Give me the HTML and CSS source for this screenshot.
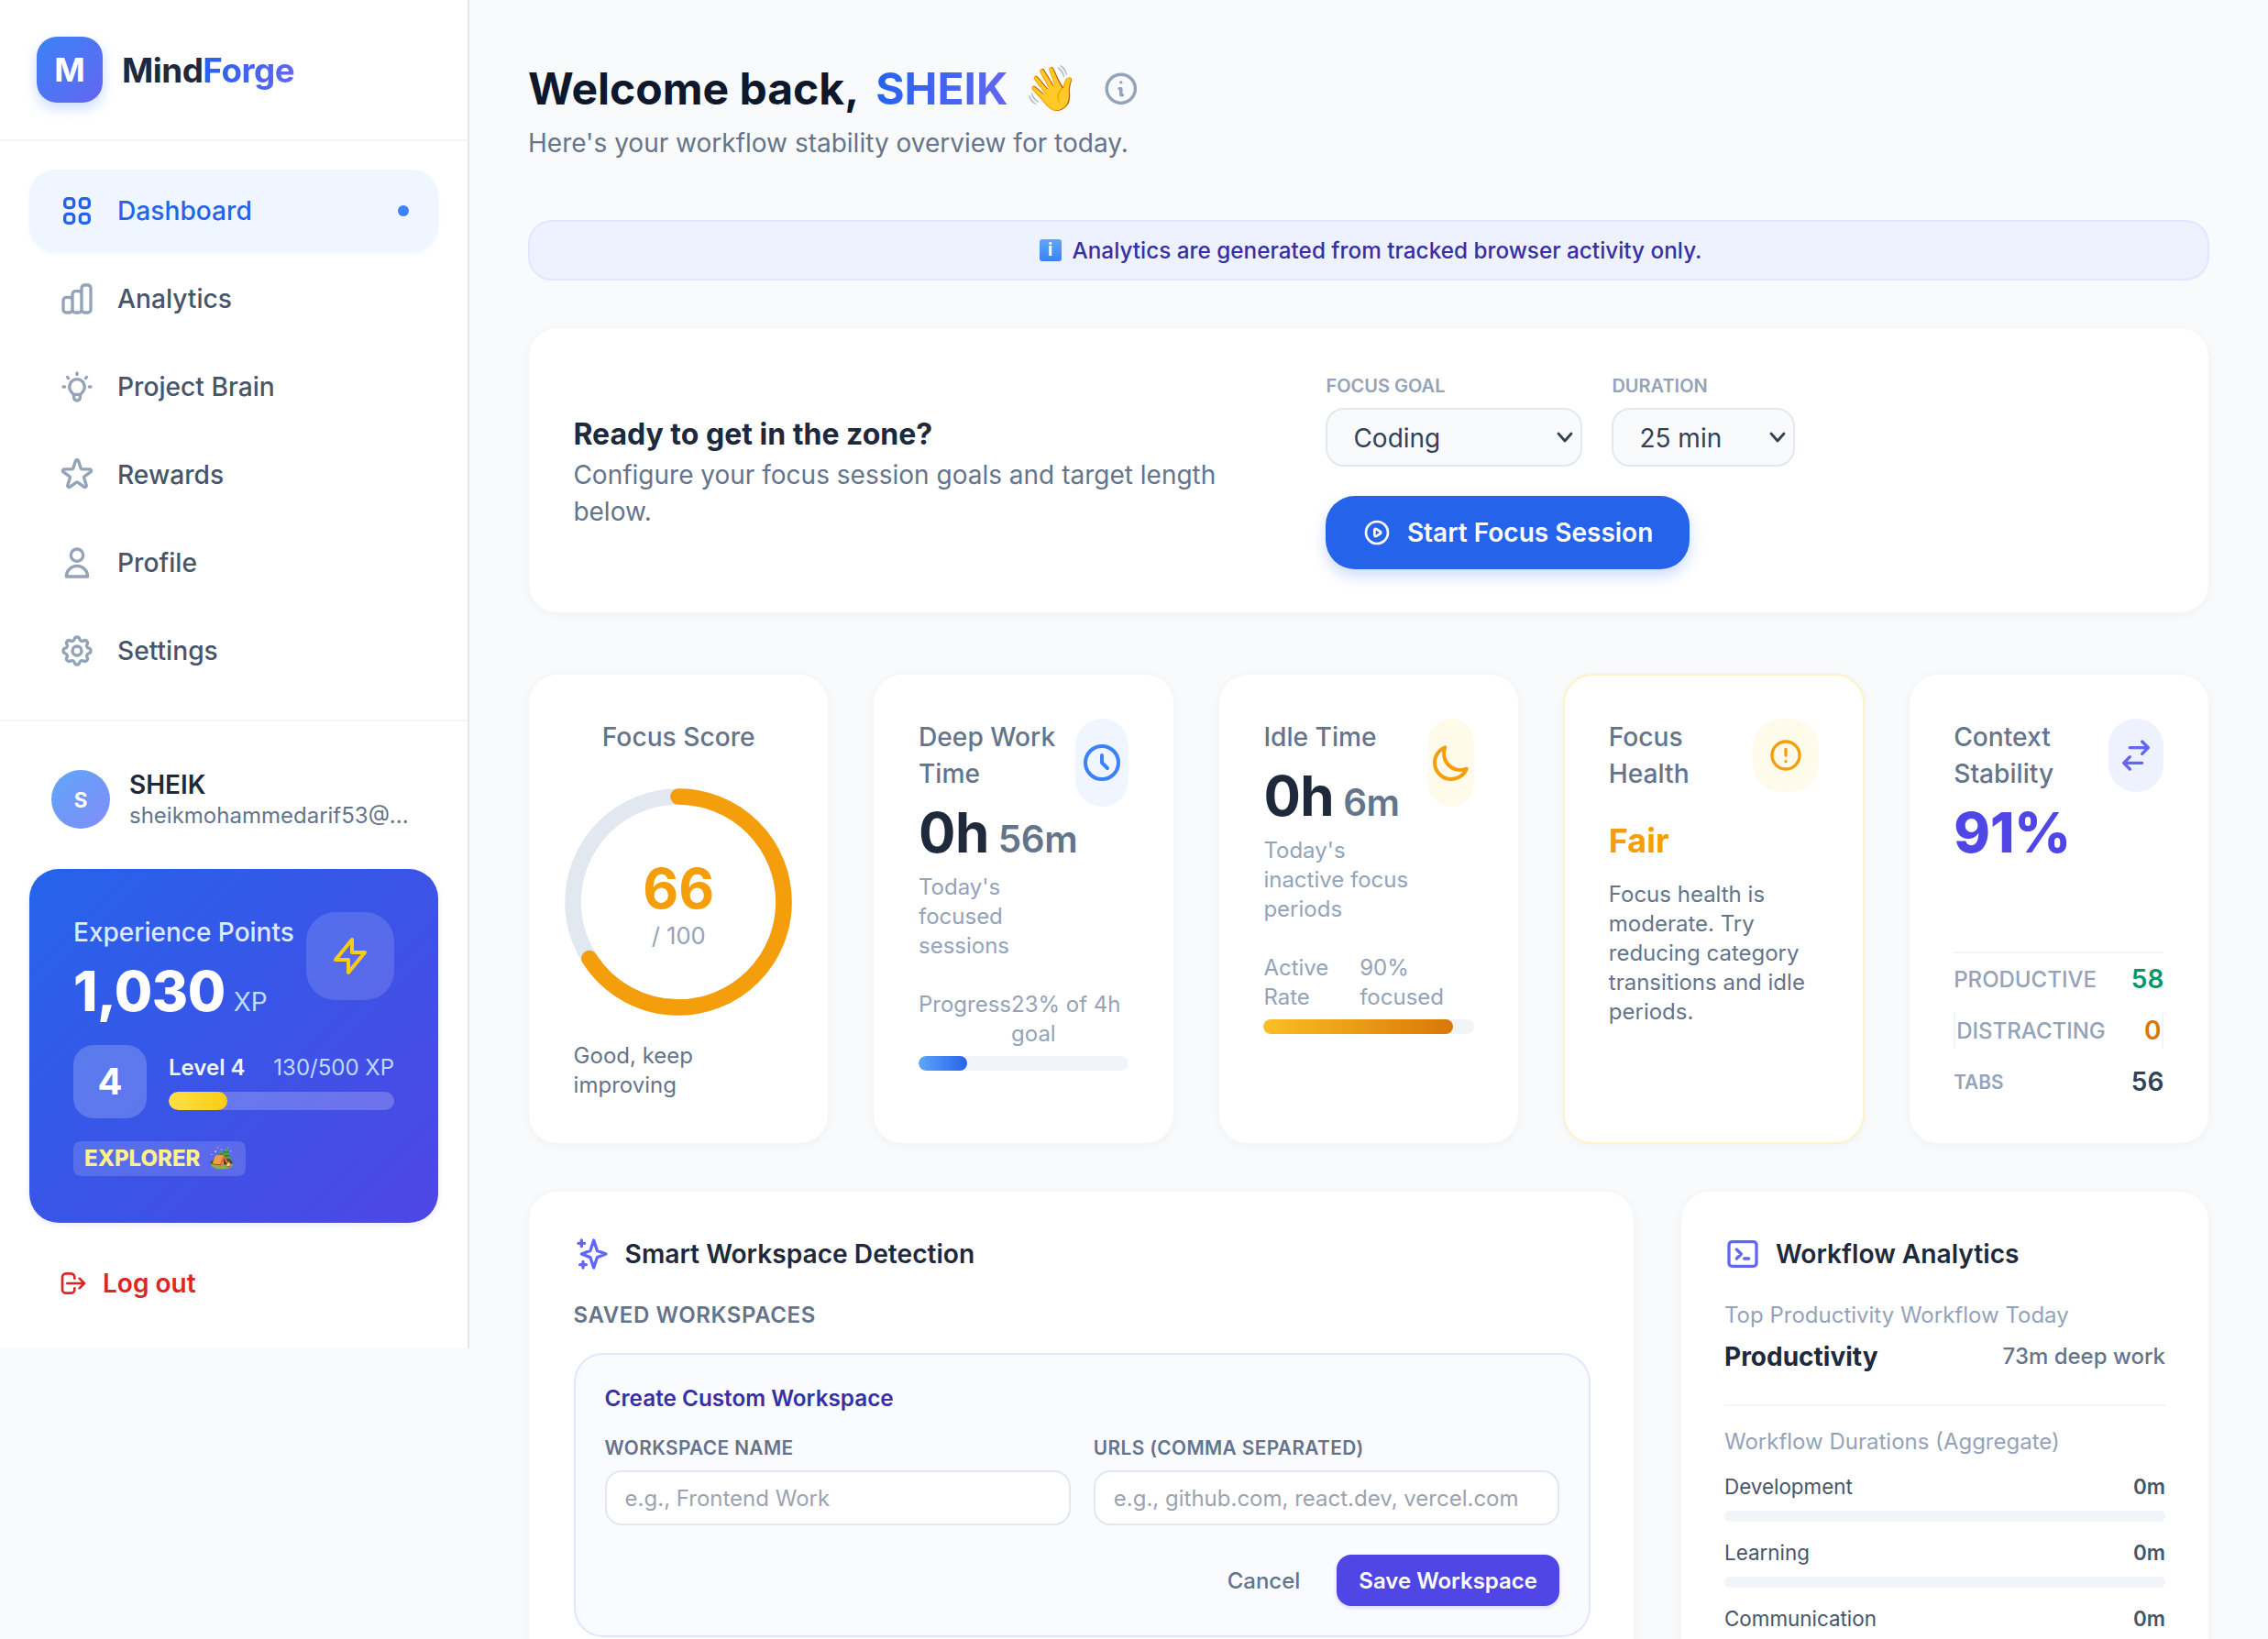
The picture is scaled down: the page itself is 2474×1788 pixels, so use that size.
FILE: index.html
```html
<!DOCTYPE html>
<html lang="en">
<head>
<meta charset="utf-8">
<title>MindForge</title>
<link rel="stylesheet" href="styles.css">
</head>
<body>
<div class="app">
  <aside class="sidebar">
    <div class="brand">
      <div class="brand-mark">M</div>
      <div class="brand-name">Mind<span class="brand-accent">Forge</span></div>
    </div>
    <nav class="nav">
      <a class="nav-item is-active">
        <svg class="nav-icon" viewBox="0 0 24 24"><path d="M4 6a2 2 0 012-2h2a2 2 0 012 2v2a2 2 0 01-2 2H6a2 2 0 01-2-2V6zM14 6a2 2 0 012-2h2a2 2 0 012 2v2a2 2 0 01-2 2h-2a2 2 0 01-2-2V6zM4 16a2 2 0 012-2h2a2 2 0 012 2v2a2 2 0 01-2 2H6a2 2 0 01-2-2v-2zM14 16a2 2 0 012-2h2a2 2 0 012 2v2a2 2 0 01-2 2h-2a2 2 0 01-2-2v-2z"/></svg>
        <span>Dashboard</span><i class="nav-dot"></i>
      </a>
      <a class="nav-item">
        <svg class="nav-icon" viewBox="0 0 24 24"><path d="M9 19v-6a2 2 0 00-2-2H5a2 2 0 00-2 2v6a2 2 0 002 2h2a2 2 0 002-2zm0 0V9a2 2 0 012-2h2a2 2 0 012 2v10m-6 0a2 2 0 002 2h2a2 2 0 002-2m0 0V5a2 2 0 012-2h2a2 2 0 012 2v14a2 2 0 01-2 2h-2a2 2 0 01-2-2z"/></svg>
        <span>Analytics</span>
      </a>
      <a class="nav-item">
        <svg class="nav-icon" viewBox="0 0 24 24"><path d="M9.663 17h4.673M12 3v1m6.364 1.636l-.707.707M21 12h-1M4 12H3m3.343-5.657l-.707-.707m2.828 9.9a5 5 0 117.072 0l-.548.547A3.374 3.374 0 0014 18.469V19a2 2 0 11-4 0v-.531c0-.895-.356-1.754-.988-2.386l-.548-.547z"/></svg>
        <span>Project Brain</span>
      </a>
      <a class="nav-item">
        <svg class="nav-icon" viewBox="0 0 24 24"><path d="M11.049 2.927c.3-.921 1.603-.921 1.902 0l1.519 4.674a1 1 0 00.95.69h4.915c.969 0 1.371 1.24.588 1.81l-3.976 2.888a1 1 0 00-.363 1.118l1.518 4.674c.3.922-.755 1.688-1.538 1.118l-3.976-2.888a1 1 0 00-1.176 0l-3.976 2.888c-.783.57-1.838-.197-1.538-1.118l1.518-4.674a1 1 0 00-.363-1.118l-3.976-2.888c-.784-.57-.38-1.81.588-1.81h4.914a1 1 0 00.951-.69l1.519-4.674z"/></svg>
        <span>Rewards</span>
      </a>
      <a class="nav-item">
        <svg class="nav-icon" viewBox="0 0 24 24"><path d="M16 7a4 4 0 11-8 0 4 4 0 018 0zM12 14a7 7 0 00-7 7h14a7 7 0 00-7-7z"/></svg>
        <span>Profile</span>
      </a>
      <a class="nav-item">
        <svg class="nav-icon" viewBox="0 0 24 24"><path d="M10.325 4.317c.426-1.756 2.924-1.756 3.35 0a1.724 1.724 0 002.573 1.066c1.543-.94 3.31.826 2.37 2.37a1.724 1.724 0 001.065 2.572c1.756.426 1.756 2.924 0 3.35a1.724 1.724 0 00-1.066 2.573c.94 1.543-.826 3.31-2.37 2.37a1.724 1.724 0 00-2.572 1.065c-.426 1.756-2.924 1.756-3.35 0a1.724 1.724 0 00-2.573-1.066c-1.543.94-3.31-.826-2.37-2.37a1.724 1.724 0 00-1.065-2.572c-1.756-.426-1.756-2.924 0-3.35a1.724 1.724 0 001.066-2.573c-.94-1.543.826-3.31 2.37-2.37.996.608 2.296.07 2.572-1.065z"/><path d="M15 12a3 3 0 11-6 0 3 3 0 016 0z"/></svg>
        <span>Settings</span>
      </a>
    </nav>
    <div class="side-bottom">
      <div class="user">
        <div class="avatar">S</div>
        <div class="user-text">
          <div class="user-name">SHEIK</div>
          <div class="user-mail">sheikmohammedarif53@...</div>
        </div>
      </div>
      <div class="xp-card">
        <div class="xp-top">
          <div>
            <div class="xp-label">Experience Points</div>
            <div class="xp-total"><span>1,030</span><span class="xp-unit">XP</span></div>
          </div>
          <div class="xp-bolt">
            <svg class="icon-48" viewBox="0 0 24 24"><path d="M13 10V3L4 14h7v7l9-11h-7z"/></svg>
          </div>
        </div>
        <div class="xp-level">
          <div class="level-badge">4</div>
          <div class="level-info">
            <div class="level-row"><span class="level-name">Level 4</span><span class="level-xp">130/500 XP</span></div>
            <div class="level-track"><div class="level-fill" style="width:26%"></div></div>
          </div>
        </div>
        <div class="rank"><span>EXPLORER</span><span class="emoji rank-emoji">🏕️</span></div>
      </div>
      <a class="logout">
        <svg class="icon-32" viewBox="0 0 24 24"><path d="M17 16l4-4m0 0l-4-4m4 4H7m6 4v1a3 3 0 01-3 3H6a3 3 0 01-3-3V7a3 3 0 013-3h4a3 3 0 013 3v1"/></svg>
        <span>Log out</span>
      </a>
    </div>
  </aside>

  <main class="main">
    <header class="page-head">
      <h1 class="page-title"><span>Welcome back,</span><span class="title-name">SHEIK</span><span class="emoji wave">👋</span>
        <svg class="info-icon" viewBox="0 0 24 24"><path d="M13 16h-1v-4h-1m1-4h.01M21 12a9 9 0 11-18 0 9 9 0 0118 0z"/></svg>
      </h1>
      <p class="page-sub">Here's your workflow stability overview for today.</p>
    </header>

    <div class="notice"><span class="notice-badge">i</span><span>Analytics are generated from tracked browser activity only.</span></div>

    <section class="card focus-panel">
      <div class="focus-copy">
        <h2 class="focus-title">Ready to get in the zone?</h2>
        <p class="focus-text">Configure your focus session goals and target length below.</p>
      </div>
      <div class="focus-form">
        <div class="focus-fields">
          <label class="field">
            <span class="field-label">FOCUS GOAL</span>
            <select class="select select-goal"><option>Coding</option></select>
          </label>
          <label class="field">
            <span class="field-label">DURATION</span>
            <select class="select select-time"><option>25 min</option></select>
          </label>
        </div>
        <button class="btn-start">
          <svg class="icon-32" viewBox="0 0 24 24"><path d="M14.752 11.168l-3.197-2.132A1 1 0 0010 9.87v4.263a1 1 0 001.555.832l3.197-2.132a1 1 0 000-1.664z"/><path d="M21 12a9 9 0 11-18 0 9 9 0 0118 0z"/></svg>
          Start Focus Session
        </button>
      </div>
    </section>

    <section class="stats">
      <article class="card stat stat-score">
        <div class="stat-title">Focus Score</div>
        <div class="ring">
          <svg class="ring-svg" viewBox="0 0 248 248">
            <circle class="ring-track" cx="124" cy="124" r="115"/>
            <circle class="ring-value" cx="124" cy="124" r="115" pathLength="100" stroke-dasharray="66 100" transform="rotate(-90 124 124)"/>
          </svg>
          <div class="ring-center">
            <div class="ring-num">66</div>
            <div class="ring-max">/ 100</div>
          </div>
        </div>
        <p class="score-note">Good, keep improving</p>
      </article>

      <article class="card stat">
        <div class="stat-head">
          <div class="stat-lead">
            <div class="stat-title">Deep Work Time</div>
            <div class="stat-value">0h<span class="stat-minor">56m</span></div>
            <p class="stat-note">Today's focused sessions</p>
          </div>
          <div class="stat-icon icon-deep">
            <svg class="icon-48 c-blue" viewBox="0 0 24 24"><path d="M12 8v4l3 3m6-3a9 9 0 11-18 0 9 9 0 0118 0z"/></svg>
          </div>
        </div>
        <div class="split"><span>Progress</span><span>23% of 4h goal</span></div>
        <div class="track"><div class="fill fill-blue" style="width:23%"></div></div>
      </article>

      <article class="card stat">
        <div class="stat-head">
          <div class="stat-lead">
            <div class="stat-title">Idle Time</div>
            <div class="stat-value">0h<span class="stat-minor">6m</span></div>
            <p class="stat-note">Today's inactive focus periods</p>
          </div>
          <div class="stat-icon icon-idle">
            <svg class="icon-48 c-amber" viewBox="0 0 24 24"><path d="M20.354 15.354A9 9 0 018.646 3.646 9.003 9.003 0 0012 21a9.003 9.003 0 008.354-5.646z"/></svg>
          </div>
        </div>
        <div class="split"><span>Active Rate</span><span>90% focused</span></div>
        <div class="track"><div class="fill fill-amber" style="width:90%"></div></div>
      </article>

      <article class="card stat stat-health">
        <div class="stat-head">
          <div class="stat-lead">
            <div class="stat-title">Focus Health</div>
          </div>
          <div class="stat-icon icon-health">
            <svg class="icon-40 c-amber" viewBox="0 0 24 24"><path d="M12 8v4m0 4h.01M21 12a9 9 0 11-18 0 9 9 0 0118 0z"/></svg>
          </div>
        </div>
        <div class="health-value">Fair</div>
        <p class="health-text">Focus health is moderate. Try reducing category transitions and idle periods.</p>
      </article>

      <article class="card stat stat-context">
        <div class="stat-head">
          <div class="stat-lead">
            <div class="stat-title">Context Stability</div>
            <div class="context-value">91%</div>
          </div>
          <div class="stat-icon icon-context">
            <svg class="icon-40 c-indigo" viewBox="0 0 24 24"><path d="M8 7h12m0 0l-4-4m4 4l-4 4m0 6H4m0 0l4 4m-4-4l4-4"/></svg>
          </div>
        </div>
        <div class="tally">
          <div class="tally-row"><span>PRODUCTIVE</span><b class="t-green">58</b></div>
          <div class="tally-row tally-boxed"><span>DISTRACTING</span><b class="t-orange">0</b></div>
          <div class="tally-row tally-small"><span>TABS</span><b class="t-slate">56</b></div>
        </div>
      </article>
    </section>

    <section class="lower">
      <article class="card panel panel-smart">
        <h3 class="panel-title">
          <svg class="icon-40 c-indigo" viewBox="0 0 24 24"><path d="M5 3v4M3 5h4M6 17v4m-2-2h4m5-16l2.286 6.857L21 12l-5.714 2.143L13 21l-2.286-6.857L5 12l5.714-2.143L13 3z"/></svg>
          Smart Workspace Detection
        </h3>
        <div class="saved-label">SAVED WORKSPACES</div>
        <form class="create">
          <div class="create-title">Create Custom Workspace</div>
          <div class="create-grid">
            <label class="create-field">
              <span class="create-label">WORKSPACE NAME</span>
              <input class="input" placeholder="e.g., Frontend Work">
            </label>
            <label class="create-field">
              <span class="create-label">URLS (COMMA SEPARATED)</span>
              <input class="input" placeholder="e.g., github.com, react.dev, vercel.com">
            </label>
          </div>
          <div class="create-actions">
            <button type="button" class="btn-cancel">Cancel</button>
            <button type="button" class="btn-save">Save Workspace</button>
          </div>
        </form>
      </article>

      <article class="card panel panel-flow">
        <h3 class="panel-title">
          <svg class="icon-40 c-indigo" viewBox="0 0 24 24"><path d="M8 9l3 3-3 3m5 0h3M5 20h14a2 2 0 002-2V6a2 2 0 00-2-2H5a2 2 0 00-2 2v12a2 2 0 002 2z"/></svg>
          Workflow Analytics
        </h3>
        <div class="muted-label">Top Productivity Workflow Today</div>
        <div class="top-flow"><strong>Productivity</strong><span>73m deep work</span></div>
        <div class="muted-label durations">Workflow Durations (Aggregate)</div>
        <div class="flow"><div class="flow-row"><span>Development</span><b>0m</b></div><div class="flow-track"></div></div>
        <div class="flow"><div class="flow-row"><span>Learning</span><b>0m</b></div><div class="flow-track"></div></div>
        <div class="flow"><div class="flow-row"><span>Communication</span><b>0m</b></div><div class="flow-track"></div></div>
      </article>
    </section>
  </main>
</div>
</body>
</html>
```
FILE: styles.css
```css
* { box-sizing: border-box; }
html, body { margin: 0; padding: 0; height: 100%; }
body {
  font-family: Inter, "Noto Sans", sans-serif;
  background: #f8fafc;
  color: #1e293b;
  overflow: hidden;
}
h1, h2, h3, p { margin: 0; }
svg { fill: none; stroke: currentColor; stroke-width: 2; stroke-linecap: round; stroke-linejoin: round; flex-shrink: 0; display: block; }
.emoji { font-family: "Noto Color Emoji", Inter, sans-serif; font-weight: 400; }

.app { display: flex; align-items: flex-start; height: 1788px; overflow: hidden; }

/* Sidebar */
.sidebar { width: 512px; flex-shrink: 0; background: #fff; border-right: 2px solid #e2e8f0; }
.brand { display: flex; align-items: center; gap: 21px; padding: 40px; border-bottom: 2px solid #f1f5f9; height: 154px; }
.brand-mark {
  width: 72px; height: 72px; border-radius: 22px;
  background: linear-gradient(135deg, #3b82f6, #6366f1);
  box-shadow: 0 6px 14px rgba(59, 130, 246, .28);
  color: #fff; font-weight: 700; font-size: 36px;
  display: flex; align-items: center; justify-content: center;
}
.brand-name { font-size: 36.8px; font-weight: 700; letter-spacing: -.5px; color: #1e293b; }
.brand-accent { background: linear-gradient(90deg, #2563eb, #6366f1); -webkit-background-clip: text; background-clip: text; color: transparent; }

.nav { display: flex; flex-direction: column; gap: 6.4px; padding: 31px 32px 30px; }
.nav-item { display: flex; align-items: center; gap: 24px; height: 89.6px; padding: 0 32px; border-radius: 28px; font-size: 28.16px; font-weight: 500; color: #475569; }
.nav-icon { width: 40px; height: 40px; color: #94a3b8; }
.nav-item.is-active { background: #eff6ff; color: #2563eb; box-shadow: 0 2px 4px rgba(37, 99, 235, .05); }
.is-active .nav-icon { color: #2563eb; }
.nav-dot { width: 12px; height: 12px; border-radius: 50%; background: #3b82f6; margin-left: auto; }

.side-bottom { border-top: 2px solid #f1f5f9; padding: 52px 32px 51px; }
.user { display: flex; align-items: center; gap: 21px; padding: 0 24px; }
.avatar { width: 64px; height: 64px; border-radius: 50%; background: linear-gradient(135deg, #60a5fa, #818cf8); color: #fff; font-weight: 700; font-size: 22.4px; display: flex; align-items: center; justify-content: center; flex-shrink: 0; }
.user-text { min-width: 0; flex: 1; }
.user-name { font-size: 28px; font-weight: 600; color: #1e293b; line-height: 35px; }
.user-mail { font-size: 24px; color: #64748b; line-height: 32px; white-space: nowrap; }

.xp-card { margin-top: 42px; height: 386px; padding: 49px 48px 48px; border-radius: 32px; background: linear-gradient(135deg, #2563eb, #4f46e5); color: #fff; box-shadow: 0 2px 6px rgba(79, 70, 229, .12); }
.xp-top { display: flex; justify-content: space-between; align-items: flex-start; }
.xp-label { font-size: 28px; font-weight: 500; color: #dbeafe; line-height: 40px; white-space: nowrap; }
.xp-total { display: flex; align-items: baseline; gap: 9px; font-size: 60px; font-weight: 800; line-height: 72px; letter-spacing: -.5px; margin-top: 8px; white-space: nowrap; }
.xp-unit { font-size: 28px; font-weight: 400; color: #bfdbfe; letter-spacing: 0; }
.xp-bolt { width: 96px; height: 96px; margin-top: -2px; border-radius: 32px; background: rgba(255, 255, 255, .14); display: flex; align-items: center; justify-content: center; color: #facc15; }
.icon-48 { width: 48px; height: 48px; }
.xp-level { display: flex; align-items: center; gap: 24px; margin-top: 11px; }
.level-badge { width: 80px; height: 80px; border-radius: 22px; background: rgba(255, 255, 255, .2); font-size: 40px; font-weight: 700; display: flex; align-items: center; justify-content: center; flex-shrink: 0; }
.level-info { flex: 1; }
.level-row { display: flex; justify-content: space-between; align-items: center; line-height: 32px; }
.level-name { font-size: 24px; font-weight: 600; color: #eff6ff; }
.level-xp { font-size: 24px; color: #bfdbfe; }
.level-track { height: 20px; border-radius: 10px; background: rgba(255, 255, 255, .22); margin-top: 10px; overflow: hidden; }
.level-fill { height: 100%; border-radius: 10px; background: linear-gradient(90deg, #fde047, #facc15); }
.rank { display: inline-flex; align-items: center; gap: 10px; height: 38px; margin-top: 25px; padding: 0 12px; border-radius: 8px; background: rgba(255, 255, 255, .15); color: #fef08a; font-size: 24px; font-weight: 800; }
.rank-emoji { font-size: 22px; line-height: 1; }

.logout { display: flex; align-items: center; gap: 16px; padding: 0 32px; margin-top: 46px; color: #dc2626; font-size: 28px; font-weight: 600; line-height: 40px; }
.icon-32 { width: 32px; height: 32px; }

/* Main */
.main { flex: 1; min-width: 0; padding: 65px 64px 0; }
.page-title { display: flex; align-items: center; gap: 18px; font-size: 48px; font-weight: 700; line-height: 64px; color: #0f172a; white-space: nowrap; }
.title-name { background: linear-gradient(90deg, #2563eb, #6366f1); -webkit-background-clip: text; background-clip: text; color: transparent; }
.wave { font-size: 48px; }
.info-icon { width: 41.6px; height: 41.6px; color: #94a3b8; margin-left: 7px; }
.page-sub { font-size: 28px; line-height: 40px; color: #64748b; margin-top: 7px; }

.notice { margin-top: 64px; height: 66px; border-radius: 26px; background: #eef2ff; border: 2px solid #e0e7ff; color: #3730a3; font-size: 24.3px; font-weight: 500; display: flex; align-items: center; justify-content: center; gap: 12px; }
.notice-badge { width: 24px; height: 24px; margin-left: 4px; border-radius: 3px; background: linear-gradient(180deg, #60a5fa, #3b82f6); color: #fff; font-size: 19px; font-weight: 700; line-height: 24px; text-align: center; }

.card { background: #fff; border: 1px solid #f4f7fa; border-radius: 32px; box-shadow: 0 2px 10px rgba(15, 23, 42, .04); }

.focus-panel { margin-top: 51px; height: 312px; padding: 48px 48.4px; display: flex; align-items: center; gap: 48px; }
.focus-copy { width: 773px; flex-shrink: 0; padding-top: 6px; }
.focus-title { font-size: 32px; font-weight: 700; color: #1e293b; line-height: 40px; }
.focus-text { font-size: 28px; color: #64748b; line-height: 40px; margin-top: 4px; }
.focus-fields { display: flex; gap: 32px; }
.field { display: flex; flex-direction: column; gap: 9px; }
.field-label { font-size: 20px; font-weight: 600; color: #94a3b8; line-height: 30px; }
.select {
  appearance: none; -webkit-appearance: none;
  height: 64px; border: 2px solid #e2e8f0; border-radius: 20px;
  background-color: #f8fafc;
  background-image: url("data:image/svg+xml,%3Csvg xmlns='http://www.w3.org/2000/svg' viewBox='0 0 18 12'%3E%3Cpath d='M2 2l7 8 7-8' fill='none' stroke='%23334155' stroke-width='2.8' stroke-linecap='round' stroke-linejoin='round'/%3E%3C/svg%3E");
  background-repeat: no-repeat; background-position: right 8px center; background-size: 18px 12px;
  font-family: inherit; font-size: 28px; color: #334155; padding: 2px 24px 0 28px;
}
.select-goal { width: 280px; }
.select-time { width: 200px; }
.btn-start { display: inline-flex; align-items: center; gap: 17px; margin-top: 32px; height: 80px; padding: 0 39.5px; border: 0; border-radius: 32px; background: #2563eb; color: #fff; font-family: inherit; font-size: 28px; font-weight: 600; box-shadow: 0 8px 16px rgba(37, 99, 235, .22); }

.stats { display: grid; grid-template-columns: repeat(5, minmax(0, 1fr)); gap: 48px; margin-top: 66px; }
.stat { padding: 48px 48.6px 47px; display: flex; flex-direction: column; }
.stat-title { font-size: 28.16px; font-weight: 500; line-height: 40px; color: #64748b; }
.stat-score .stat-title { text-align: center; }
.ring { position: relative; width: 248px; height: 248px; align-self: center; margin-top: 36px; }
.ring-svg { width: 248px; height: 248px; }
.ring-track { stroke: #e2e8f0; stroke-width: 17.6; fill: none; }
.ring-value { stroke: #f59e0b; stroke-width: 17.6; fill: none; stroke-linecap: round; }
.ring-center { position: absolute; inset: 0; padding-top: 7px; display: flex; flex-direction: column; align-items: center; justify-content: center; }
.ring-num { font-size: 60px; font-weight: 700; color: #f59e0b; line-height: 64px; margin-top: 2px; }
.ring-max { font-size: 25.6px; color: #94a3b8; line-height: 40px; }
.score-note { margin-top: 28px; font-size: 24px; line-height: 32px; color: #64748b; }

.stat-head { display: flex; align-items: flex-start; }
.stat-lead { flex: 1; min-width: 0; }
.stat-value { display: flex; align-items: baseline; gap: 10px; font-size: 60px; font-weight: 700; line-height: 60px; color: #1e293b; margin-top: 14px; white-space: nowrap; letter-spacing: -.5px; }
.stat-minor { font-size: 40.5px; font-weight: 600; color: #64748b; }
.stat-icon { border-radius: 32px; display: flex; align-items: center; justify-content: center; flex-shrink: 0; }
.icon-40 { width: 40px; height: 40px; }
.c-blue { color: #3b82f6; }
.c-amber { color: #f59e0b; }
.c-indigo { color: #6366f1; }
.icon-deep { width: 58px; height: 96px; background: #eff6ff; }
.icon-idle { width: 50px; height: 96px; background: #fffbeb; }
.icon-health { width: 72px; height: 80px; background: #fffbeb; }
.icon-context { width: 60px; height: 80px; background: #eef2ff; }
.stat-note { font-size: 24px; line-height: 32px; color: #94a3b8; margin-top: 6px; }
.split { display: flex; justify-content: space-between; font-size: 24px; line-height: 32px; color: #94a3b8; margin-top: 32px; }
.track { height: 16px; border-radius: 8px; background: #f1f5f9; margin-top: 8px; overflow: hidden; }
.fill { height: 100%; border-radius: 8px; }
.fill-blue { background: linear-gradient(90deg, #60a5fa, #2563eb); }
.fill-amber { background: linear-gradient(90deg, #fbbf24, #d97706); }

.stat-health { border: 2px solid #fef3c7; padding: 47px 47.6px 46px; }
.health-value { font-size: 36px; font-weight: 700; color: #f59e0b; line-height: 48px; margin-top: 29px; }
.health-text { font-size: 24px; line-height: 32px; color: #64748b; margin-top: 19px; }

.context-value { font-size: 60px; font-weight: 800; line-height: 60px; color: #4f46e5; margin-top: 14px; }
.tally { margin-top: auto; border-top: 2px solid #f1f5f9; padding-top: 8px; display: flex; flex-direction: column; gap: 16px; }
.tally-row { display: flex; justify-content: space-between; align-items: center; height: 40px; font-size: 24px; font-weight: 500; color: #94a3b8; }
.tally-row b { font-size: 28px; font-weight: 600; }
.tally-boxed { border-left: 2px solid #f1f5f9; border-right: 2px solid #f1f5f9; padding: 0 1px; }
.tally-small span { font-size: 20.8px; font-weight: 600; }
.t-green { color: #059669; }
.t-orange { color: #d97706; }
.t-slate { color: #334155; }

.lower { display: grid; grid-template-columns: 1207px minmax(0, 1fr); gap: 50px; margin-top: 51px; }
.panel { height: 600px; }
.panel-smart { padding: 48px 47px 47px 48.6px; }
.panel-flow { padding: 48px 47px; }
.panel-title { display: flex; align-items: center; gap: 16px; font-size: 28.16px; font-weight: 600; color: #1e293b; line-height: 40px; }
.saved-label { font-size: 24px; font-weight: 600; color: #64748b; line-height: 36px; margin-top: 29px; letter-spacing: .6px; }
.create { margin-top: 23px; height: 310px; border: 2px solid #e0e7ff; border-radius: 32px; background: #fafbff; padding: 31px 32px; }
.create-title { font-size: 24.3px; font-weight: 600; color: #3730a3; line-height: 32px; }
.create-grid { display: grid; grid-template-columns: minmax(0, 1fr) minmax(0, 1fr); gap: 25px; margin-top: 24px; }
.create-field { display: flex; flex-direction: column; gap: 9px; }
.create-label { font-size: 20.8px; font-weight: 600; color: #64748b; line-height: 30px; letter-spacing: .4px; }
.input { height: 60px; border: 2px solid #e2e8f0; border-radius: 18px; background: #fff; padding: 0 20px; font-family: inherit; font-size: 24px; width: 100%; }
.input::placeholder { color: #9ca3af; }
.create-actions { display: flex; justify-content: flex-end; align-items: center; gap: 40px; margin-top: 32px; }
.btn-cancel { border: 0; background: none; padding: 0; font-family: inherit; font-size: 24px; font-weight: 500; color: #64748b; }
.btn-save { height: 56px; padding: 0 24px; border: 0; border-radius: 16px; background: #4f46e5; color: #fff; font-family: inherit; font-size: 24px; font-weight: 600; box-shadow: 0 2px 4px rgba(79, 70, 229, .2); }

.muted-label { font-size: 24px; line-height: 32px; color: #94a3b8; margin-top: 31px; }
.top-flow { display: flex; justify-content: space-between; align-items: center; margin-top: 9px; padding-bottom: 32px; border-bottom: 2px solid #f1f5f9; line-height: 40px; }
.top-flow strong { font-size: 28px; font-weight: 700; color: #1e293b; }
.top-flow span { font-size: 24px; font-weight: 500; color: #64748b; }
.muted-label.durations { margin-top: 23px; }
.flow { margin-top: 17px; }
.flow + .flow { margin-top: 18px; }
.flow-row { display: flex; justify-content: space-between; align-items: center; font-size: 22.4px; line-height: 32px; color: #475569; }
.flow-row b { font-weight: 600; }
.flow-track { height: 12px; border-radius: 6px; background: #f1f5f9; margin-top: 10px; }
```
